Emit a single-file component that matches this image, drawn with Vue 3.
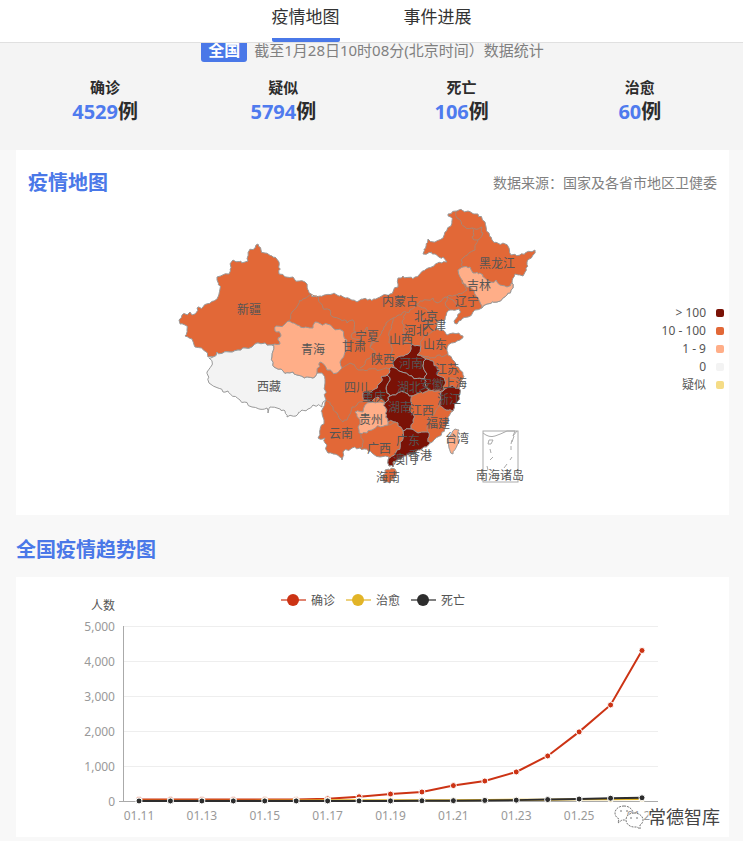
<template>
  <div class="page">
    <nav class="tabs">
      <a href="#map" class="tab active">疫情地图</a>
      <a href="#news" class="tab">事件进展</a>
    </nav>

    <section class="summary">
      <p class="updated">
        <span class="badge">全国</span>
        <span>截至1月28日10时08分(北京时间）数据统计</span>
      </p>
      <ul class="stats">
        <li v-for="item in stats" :key="item.label">
          <span class="stat-label">{{ item.label }}</span>
          <span class="stat-value"><b>{{ item.value }}</b>例</span>
        </li>
      </ul>
    </section>

    <main class="content">
      <section id="map" class="card">
        <header class="card-head">
          <h2>疫情地图</h2>
          <span class="source">数据来源：国家及各省市地区卫健委</span>
        </header>
        <svg class="map" viewBox="16 205 713 295">
          <polygon
            v-for="area in areas"
            :key="area.name"
            :points="roughen(area.points, true)"
            :class="['area', area.level]"
          />
          <polyline v-for="line in borders" :key="line" :points="roughen(line)" class="border" />
          <g class="islands">
            <rect x="483" y="431" width="35" height="51" />
            <path d="M483 433q6 5 12 3t12-5h8l-2 5 4-5M489 440h4l-2 4h-3zM490 449l1 4M493 457l-3 3M487 466l1 4M514 436l-2 6M512 440l-1 4M511 446v4M512 457l-2 3M507 464l-3 4" />
          </g>
          <g class="labels">
            <text v-for="label in labels" :key="label[0]" :x="label[1]" :y="label[2] + 5">{{ label[0] }}</text>
          </g>
        </svg>
        <ul class="legend">
          <li v-for="item in legend" :key="item.text">
            {{ item.text }}<i :class="['swatch', item.level]"></i>
          </li>
        </ul>
      </section>

      <h2 class="trend-title">全国疫情趋势图</h2>
      <section class="card">
        <svg class="chart" viewBox="16 577 713 260">
          <g v-for="(s, i) in series" :key="s.name">
            <line :x1="281 + i * 65" :x2="306 + i * 65" y1="600" y2="600" :class="['key-line', s.cls]" />
            <circle :cx="293 + i * 65" cy="600" r="6" :class="['key-dot', s.cls]" />
            <text :x="311 + i * 65" y="605" class="key-text">{{ s.name }}</text>
          </g>
          <text x="115" y="610" class="key-text end">人数</text>
          <g v-for="tick in ticks" :key="tick">
            <line v-if="tick" x1="123" x2="658" :y1="toY(tick)" :y2="toY(tick)" class="grid" />
            <text x="115" :y="toY(tick) + 5" class="axis-text end">{{ tick.toLocaleString('en-US') }}</text>
          </g>
          <path d="M123 626V801M119 801H658" class="axis" />
          <text
            v-for="n in 9"
            :key="n"
            :x="toX(n * 2 - 2)"
            y="820"
            class="axis-text middle"
          >01.{{ 9 + n * 2 }}</text>
          <g v-for="s in series" :key="s.cls">
            <polyline :points="toLine(s.data)" :class="['curve', s.cls]" />
            <circle
              v-for="(v, i) in s.data"
              :key="i"
              :cx="toX(i)"
              :cy="toY(v)"
              r="3"
              :class="['point', s.cls]"
            />
          </g>
        </svg>
        <div class="watermark">
          <svg viewBox="0 0 30 24">
            <path d="M10 1C5 1 1 4 1 8c0 3 2 5 4 6l-1 4 4-3h4M10 1c5 0 8 3 9 6" />
            <path d="M20 8c-5 0-8 3-8 7s4 7 8 7h3l3 2v-4c2-1 3-3 3-5 0-4-4-7-9-7z" />
            <path d="M7 5v2M13 5v2M17 12v2M23 12v2" />
          </svg>
          <span>常德智库</span>
        </div>
      </section>
    </main>
  </div>
</template>

<script setup>
const stats = [
  { label: '确诊', value: 4529 },
  { label: '疑似', value: 5794 },
  { label: '死亡', value: 106 },
  { label: '治愈', value: 60 },
]

const legend = [
  { text: '> 100', level: 'high' },
  { text: '10 - 100', level: 'mid' },
  { text: '1 - 9', level: 'low' },
  { text: '0', level: 'none' },
  { text: '疑似', level: 'suspect' },
]

const areas = [
  {
    name: 'mainland',
    level: 'mid',
    points:
      '258,244 261,250 265,253 275,257 279,262 279,274 293,277 305,282 311,294 320,296 337,295 350,299 357,302 370,299 380,297 390,294 398,287 398,284 398,278 403,276 415,277 428,268 442,263 447,262 443,257 435,254 430,253 423,254 428,239 435,242 443,238 445,232 452,223 448,214 457,211 468,211 478,214 485,222 489,233 492,240 503,243 509,248 511,255 520,255 535,250 533,255 527,262 525,272 523,276 515,274 513,278 512,283 513,288 507,295 497,302 487,304 482,308 473,312 468,317 457,324 454,321 460,313 459,309 450,310 445,320 437,322 436,328 443,330 447,335 453,333 463,336 460,340 452,343 447,348 448,355 455,362 460,370 463,375 462,380 459,388 459,400 453,411 448,420 442,432 430,443 420,450 408,454 398,459 393,462 393,467 389,466 389,458 380,457 372,453 360,448 352,448 343,452 342,460 335,454 328,453 327,445 325,438 318,438 320,430 324,420 323,408 326,400 272,345 257,343 252,347 245,348 238,350 230,352 217,352 213,357 208,357 205,351 195,347 192,339 185,336 187,330 185,325 180,324 179,320 182,315 190,312 192,315 197,308 203,307 217,299 220,289 217,277 229,274 230,270 233,260 248,261 249,251 255,248 256,245',
  },
  {
    name: 'xizang',
    level: 'none',
    points:
      '209,358 212,365 207,372 209,383 223,392 228,391 240,400 252,407 267,408 268,413 270,407 277,408 285,411 287,417 296,416 302,410 308,409 313,405 322,407 323,402 326,400 325,383 322,373 317,373 313,378 306,377 293,372 283,371 274,367 272,357 272,345 257,343 252,347 245,348 238,350 230,352 217,352 213,357',
  },
  {
    name: 'qinghai',
    level: 'low',
    points:
      '276,326 285,324 289,321 297,325 305,327 313,328 315,322 327,324 333,328 343,331 347,340 345,352 340,362 342,368 337,373 327,370 320,362 317,373 313,378 306,377 293,372 283,371 274,367 272,357 272,345 280,344 278,340 281,335 275,331',
  },
  {
    name: 'jilin',
    level: 'low',
    points:
      '458,270 463,267 470,267 473,273 483,275 490,282 496,280 500,285 507,287 512,283 513,288 507,295 497,302 487,304 482,308 477,297 470,287 462,280',
  },
  {
    name: 'guizhou',
    level: 'low',
    points:
      '355,412 363,412 365,405 372,402 380,402 385,403 387,410 388,422 388,425 380,427 372,430 367,433 359,433 358,427 360,420',
  },
  {
    name: 'henan',
    level: 'high',
    points: '412,344 421,346 417,355 426,359 423,366 427,374 424,379 412,376 402,372 395,368 393,362 398,357 408,354',
  },
  {
    name: 'hubei',
    level: 'high',
    points: '389,369 395,368 402,372 412,376 424,379 429,390 425,392 412,396 400,392 390,396 386,389 390,380 387,375',
  },
  {
    name: 'anhui',
    level: 'high',
    points: '426,359 433,361 440,370 437,375 445,381 443,391 429,390 424,379 427,374 423,366',
  },
  {
    name: 'chongqing',
    level: 'high',
    points: '387,375 390,380 386,389 390,396 385,403 378,397 372,402 365,400 363,393 373,390 380,383 381,377',
  },
  {
    name: 'hunan',
    level: 'high',
    points: '390,396 400,392 412,396 410,407 413,420 411,429 403,431 398,423 388,422 387,410 385,403',
  },
  {
    name: 'guangdong',
    level: 'high',
    points:
      '403,431 411,429 418,433 428,432 430,443 420,450 408,454 398,459 393,462 393,467 389,466 389,458 397,450 402,441',
  },
  {
    name: 'zhejiang',
    level: 'high',
    points: '443,391 449,387 459,388 459,400 453,411 446,410 440,402',
  },
  { name: 'taiwan', level: 'low', points: '455,429 459,430 458,440 453,454 449,448 448,440' },
  { name: 'hainan', level: 'mid', points: '385,470 395,469 396,475 390,483 385,482 383,475' },
]

// province borders inside the mainland
const borders = [
  '311,294 303,299 298,305 292,312 289,321',
  '311,294 317,296 323,308 330,310 333,317 347,323 353,320 356,332 351,336 360,340',
  '360,340 367,327 373,335 370,347 374,355 365,362 360,368',
  '370,347 380,335 386,323 393,318 410,310 427,300 433,298 438,303 445,297 453,300 458,307',
  '393,318 390,337 390,355 393,362',
  '405,313 402,323 404,343 412,344',
  '342,368 350,363 360,370 380,370 389,369',
  '421,346 422,340 427,335 436,328',
  '417,355 430,358 440,355 448,355',
  '457,211 457,218 465,227 472,228 472,237 478,240 475,250 463,258 463,267',
  '472,228 482,227 483,233 478,240',
  '462,280 467,290 457,295 447,297 445,303 450,310',
  '417,305 425,308 432,315 437,322',
  '420,315 423,321 428,324 436,324',
  '326,400 333,407 337,413 343,422 347,420 352,407 357,405 365,400',
  '359,433 363,440 360,448',
  '440,402 435,412 428,420 428,432',
  '412,396 425,392 443,391',
  '388,425 398,423',
  '445,381 452,378 462,380',
]

const labels = [
  ['新疆', 249, 309],
  ['西藏', 269, 386],
  ['青海', 313, 349],
  ['甘肃', 354, 346],
  ['宁夏', 367, 336],
  ['内蒙古', 400, 301],
  ['黑龙江', 497, 263],
  ['吉林', 479, 285],
  ['辽宁', 467, 301],
  ['北京', 426, 316],
  ['天津', 434, 325],
  ['河北', 416, 330],
  ['山西', 401, 339],
  ['山东', 435, 344],
  ['陕西', 383, 359],
  ['河南', 411, 363],
  ['江苏', 447, 369],
  ['四川', 356, 387],
  ['重庆', 374, 396],
  ['湖北', 409, 387],
  ['安徽', 432, 384],
  ['上海', 455, 383],
  ['浙江', 449, 399],
  ['湖南', 400, 407],
  ['江西', 422, 410],
  ['贵州', 371, 419],
  ['福建', 438, 423],
  ['云南', 341, 433],
  ['广西', 379, 448],
  ['广东', 408, 440],
  ['香港', 420, 455],
  ['澳门', 405, 459],
  ['台湾', 457, 438],
  ['海南', 388, 477],
  ['南海诸岛', 500, 475],
]

const series = [
  {
    name: '确诊',
    cls: 'confirmed',
    data: [41, 41, 41, 41, 41, 45, 62, 121, 198, 258, 440, 571, 830, 1287, 1975, 2744, 4300],
  },
  {
    name: '治愈',
    cls: 'cured',
    data: [6, 6, 7, 7, 12, 15, 19, 24, 25, 25, 25, 28, 34, 38, 49, 51, 60],
  },
  {
    name: '死亡',
    cls: 'dead',
    data: [1, 1, 1, 1, 2, 2, 2, 3, 3, 6, 9, 17, 25, 41, 56, 80, 92],
  },
]

const ticks = [5000, 4000, 3000, 2000, 1000, 0]

const toX = (i) => 139 + (i * 503) / 16
const toY = (v) => 801 - v * 0.035
const toLine = (data) => data.map((v, i) => `${toX(i)},${toY(v)}`).join(' ')

// Wiggle depends only on the position, so neighbouring provinces keep a shared edge
const wiggle = (x, y) => {
  const n = Math.sin(x * 12.9898 + y * 78.233) * 43758.5453
  return (n - Math.floor(n) - 0.5) * 3
}

function split(a, b) {
  if (Math.hypot(a[0] - b[0], a[1] - b[1]) < 4) return [b]
  const x = (a[0] + b[0]) / 2
  const y = (a[1] + b[1]) / 2
  const mid = [x + wiggle(x, y), y + wiggle(y, x)]
  return [...split(a, mid), ...split(mid, b)]
}

function roughen(points, closed = false) {
  const list = points.split(' ').map((p) => p.split(',').map(Number))
  if (closed) list.push(list[0])
  const out = [list[0]]
  for (let i = 1; i < list.length; i++) out.push(...split(list[i - 1], list[i]))
  return out.map((p) => p.join(',')).join(' ')
}
</script>

<style>
body {
  background: #fff;
}
</style>

<style scoped>
.page {
  background: #f8f8f8;
  color: #2c2c2c;
  font-family: 'Noto Sans', 'Noto Sans CJK SC', sans-serif;
}

h2,
p,
ul {
  margin: 0;
  padding: 0;
}

ul {
  list-style: none;
}

h2 {
  color: #4a78e8;
  font-size: 20px;
  line-height: 28px;
}

.tabs {
  position: sticky;
  top: 0;
  z-index: 2;
  display: flex;
  justify-content: center;
  gap: 64px;
  height: 42px;
  background: #fff;
  border-bottom: 1px solid #e0e0e0;
}

.tab {
  box-sizing: border-box;
  height: 42px;
  color: #333;
  font-size: 17px;
  line-height: 34px;
  text-decoration: none;
}

.tab.active {
  border-bottom: 4px solid #4a78e8;
  border-radius: 2px;
}

.summary {
  padding: 0 14px 24px 16px;
  background: #f4f4f4;
}

.updated {
  display: flex;
  justify-content: center;
  gap: 7px;
  margin-top: -4px;
  color: #808080;
  font-size: 15px;
  line-height: 23px;
}

.badge {
  padding: 0 7px;
  border-radius: 3px;
  background: #4a78e8;
  color: #fff;
  font-size: 16px;
  font-weight: bold;
}

.stats {
  display: grid;
  grid-template-columns: repeat(4, 1fr);
  padding-top: 14px;
  text-align: center;
}

.stats li {
  display: flex;
  flex-direction: column;
}

.stat-label {
  font-size: 15px;
  font-weight: bold;
  line-height: 22px;
}

.stat-value {
  font-size: 20px;
  font-weight: bold;
  line-height: 28px;
}

.stat-value b {
  color: #4f7bee;
  font-weight: 700;
}

.content {
  padding: 0 14px 4px 16px;
}

.card {
  position: relative;
  background: #fff;
}

.card-head {
  display: flex;
  justify-content: space-between;
  align-items: center;
  padding: 19px 12px 8px;
}

.source {
  color: #808080;
  font-size: 14px;
  line-height: 26px;
}

.map,
.chart {
  display: block;
  width: 100%;
}

.map {
  padding-bottom: 15px;
}

.area {
  stroke: #999;
  stroke-width: 1;
  stroke-linejoin: round;
}

.border {
  fill: none;
  stroke: #a98572;
  stroke-width: 1;
}

.high {
  fill: #7a1206;
  background: #7a1206;
}

.mid {
  fill: #e26837;
  background: #e26837;
}

.low {
  fill: #ffae88;
  background: #ffae88;
}

.none {
  fill: #f3f3f3;
  background: #f3f3f3;
}

.suspect {
  background: #f5dc86;
}

.islands {
  fill: none;
  stroke: #aaa;
}

.labels {
  fill: #555;
  font-size: 12px;
  text-anchor: middle;
}

.legend {
  position: absolute;
  top: 154px;
  right: 5px;
  color: #555;
  font-size: 12px;
  line-height: 18px;
}

.legend li {
  display: flex;
  justify-content: flex-end;
  align-items: center;
  gap: 10px;
}

.swatch {
  width: 8px;
  height: 8px;
  border-radius: 2px;
}

.trend-title {
  padding: 21px 0 13px;
}

.confirmed {
  --tone: #cc3314;
}

.cured {
  --tone: #e2b427;
}

.dead {
  --tone: #2d2d2d;
}

.key-line {
  stroke: var(--tone);
  stroke-width: 2;
  opacity: 0.6;
}

.key-dot {
  fill: var(--tone);
}

.key-text {
  fill: #555;
  font-size: 12px;
}

.axis-text {
  fill: #999;
  font-size: 12px;
}

.end {
  text-anchor: end;
}

.middle {
  text-anchor: middle;
}

.grid {
  stroke: #eee;
  shape-rendering: crispEdges;
}

.axis {
  fill: none;
  stroke: #aaa;
  shape-rendering: crispEdges;
}

.curve {
  fill: none;
  stroke: var(--tone);
  stroke-width: 2;
}

.point {
  fill: var(--tone);
  stroke: #fff;
  stroke-width: 1;
}

.watermark {
  position: absolute;
  right: 9px;
  bottom: 7px;
  display: flex;
  align-items: center;
  gap: 4px;
  color: #444;
  font-size: 18px;
  line-height: 26px;
  text-shadow: 1px 1px #fff, -1px -1px #fff, 1px -1px #fff, -1px 1px #fff;
}

.watermark svg {
  width: 30px;
  height: 24px;
  fill: #fff;
  stroke: #777;
  stroke-dasharray: 2 1;
}
</style>
